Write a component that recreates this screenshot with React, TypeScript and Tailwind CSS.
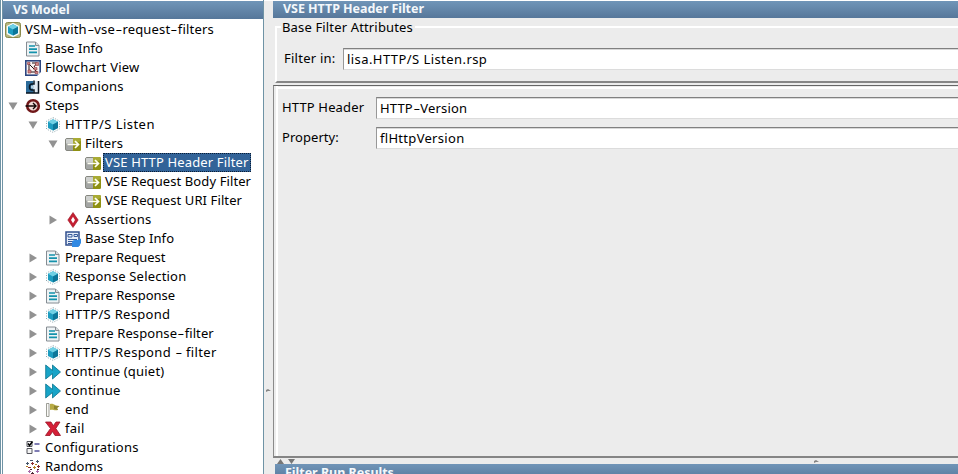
import { Fragment, type ReactNode } from "react";

type IconName =
  | "root" | "doc" | "flow" | "companion" | "steps" | "cube" | "filter"
  | "assertion" | "stepinfo" | "continue" | "end" | "fail" | "config" | "random";

const cube = (
  <>
    <path d="M8 2.200 13 4.800v6.200L8 13.600 3 11V4.800z" fill="#1c9cc0" />
    <path d="M8 2.200 13 4.800 8 7.400 3 4.800z" fill="#6fd0e4" />
    <path d="M8 7.400 13 4.800V11l-5 2.600z" fill="#0c7699" />
  </>
);

const drawings: Record<IconName, ReactNode> = {
  root: (
    <>
      <rect x="0.5" y="0.5" width="15" height="15" rx="2" fill="#b5b57c" stroke="#8b8a4c" />
      <path d="M8 .8 14.300 4v8L8 15.200 1.700 12V4z" fill="#f3fbfc" />
      {cube}
    </>
  ),
  doc: (
    <>
      <path d="M1.500 1h9l3.500 3.500V15H1.500z" fill="#eef3f5" stroke="#858c92" />
      <path d="M10.500 1v3.500H14" fill="#d7dcdf" stroke="#858c92" />
      <path d="M4 5h6M4 8.200h8M4 11.400h8" stroke="#1592ac" strokeWidth="1.700" />
    </>
  ),
  flow: (
    <>
      <rect x="0.8" y="0.8" width="14.4" height="14.4" fill="#faf4f3" stroke="#2d4680" strokeWidth="1.600" />
      <path d="M4 4v8M4 4l8 8M7 3h5M11 4l-2 3M5 12h6" stroke="#241315" />
      <path d="M2.500 2.500h2.500v2H2.500zM10.500 2.500h3v3h-3zM3 10h3v3H3zM9 7.500h3v2.500H9zM10 11.500h3v2h-3z" fill="#cf8585" stroke="#8d3a40" strokeWidth="0.600" />
      <path d="M12 16l4-4v4z" fill="#fff" />
    </>
  ),
  companion: (
    <>
      <path d="M1 2h7v12H1z" fill="#2c6b99" />
      <path d="M8 2h6v12H8z" fill="#dfe9f2" />
      <path d="M13.500 2v12H1" fill="none" stroke="#07131e" strokeWidth="1.500" />
      <path d="M9 1.500v3.500H7q-2.500 0-2.500 3T7 11h2v3" fill="none" stroke="#081723" strokeWidth="1.500" />
      <path d="M6 6.500h3v3H6z" fill="#b5cfdf" />
    </>
  ),
  steps: (
    <>
      <circle cx="8" cy="8" r="5.800" fill="#f0dcd8" stroke="#701719" strokeWidth="2.600" />
      <path d="M0.500 8H11M8 5l3 3-3 3" fill="none" stroke="#120707" strokeWidth="1.400" />
    </>
  ),
  cube: (
    <>
      <path d="M8 .6 14.500 4v8L8 15.400 1.500 12V4z" fill="#fbfdfd" stroke="#8fa6ae" strokeDasharray="1 1.500" />
      {cube}
    </>
  ),
  filter: (
    <>
      <rect x="0.5" y="2.5" width="15" height="12" rx="1.5" fill="#a3a5a3" stroke="#85877f" />
      <path d="M1 3.500q0-.5.5-.5H8v4.500H1z" fill="#cfd1cf" />
      <path d="M8 2h6.500Q16 2 16 3.500v10q0 1.500-1.500 1.500H8z" fill="#8f9112" />
      <path d="M8 2h6.500Q16 2 16 3.500V5L8 8z" fill="#a9ab35" />
      <path d="M2.500 8.500H13M10 5l3.500 3.500L10 12" fill="none" stroke="#fffff2" strokeWidth="1.700" />
    </>
  ),
  assertion: (
    <>
      <path d="M8 .5 13.200 8 8 15.500 2.800 8z" fill="#c41f32" stroke="#9a1424" strokeWidth="0.600" />
      <path d="M8 4.800 10 8 8 11.200 6 8z" fill="#fff" />
    </>
  ),
  stepinfo: (
    <>
      <rect x="1" y="1" width="13" height="13" fill="#e5edf8" stroke="#314f8d" strokeWidth="1.500" />
      <path d="M3 3.500h4v2.500H3zM9 3.500h3.500v2H9zM3 8.500h9M3 10.500h5M3 12.500h4" fill="none" stroke="#385b9b" />
      <path d="M7 16v-4q0-3 3-3h3l3-1.500V12l-2.500 4z" fill="#3189e3" />
    </>
  ),
  continue: (
    <path d="M.7 1 7.500 6.500V1l8 7-8 7V9.500L.7 15z" fill="#18a4c7" stroke="#08728d" strokeWidth="0.800" />
  ),
  end: (
    <>
      <path d="M1.500 1.500h2.500v13H1.500z" fill="#fafaf7" stroke="#85877f" strokeWidth="0.800" />
      <path d="M5 2c4-1 4 2 9.500 2L12 6l1 2C9 9 8 7 5 8z" fill="#b7aa43" />
      <path d="M9 3.500c2 1 3 .5 5.500.5L12 6l1 2-4-1z" fill="#8d832f" />
    </>
  ),
  fail: (
    <path d="M.5 1H6l2.300 3.700L11 1h4l-4.200 6.500L15.500 14.500H10L7.500 10.500 5 14.500H.5l5-7z" fill="#d51f37" stroke="#981426" strokeWidth="0.800" />
  ),
  config: (
    <>
      <path d="M2 1.500h5v5H2zM2 8.500h5v5H2z" fill="#f3f3f3" stroke="#55565e" />
      <path d="m3 3.500 1.500 2 3-4" fill="none" stroke="#000" strokeWidth="1.500" />
      <path d="M9.500 4h5M9.500 11h5" stroke="#54519a" strokeWidth="1.400" />
    </>
  ),
  random: (
    <>
      <path d="M5 1.500h3M1 4.500h3M2.500 3v3M11 2.500h3M12.500 1v3" stroke="#45566c" />
      <path d="M6 4.500h3M7.500 3v3M3 8.500h3M12 7.500h3M13.500 6v3M10 15.500h3" stroke="#8b2d2f" />
      <path d="M10 5.500h2M8 8.500h3M9.500 7v3M1 7.500h2" stroke="#b78120" />
      <path d="M3 12.500h3M4.500 11v3M11 12.500h3M12.500 11v3" stroke="#a869ab" />
      <path d="M6 14.500h3M7.500 13v3M5 10.500h2M12 10.500h2" stroke="#4b2632" />
    </>
  ),
};

function Icon({ name }: { name: IconName }) {
  return (
    <svg viewBox="0 0 16 16" className="size-4 shrink-0">
      {drawings[name]}
    </svg>
  );
}

function Toggle({ open }: { open: boolean }) {
  return (
    <svg viewBox="0 0 10 10" className="size-2.5 shrink-0">
      <path d={open ? "M.5 1.500h9L5 9z" : "M1.500.5v9L9 5z"} fill="#929292" />
    </svg>
  );
}

/** Text whose hyphens are drawn wide. */
function Label({ text }: { text: string }) {
  return (
    <>
      {text.split("-").map((part, i) => (
        <Fragment key={i}>
          {i > 0 && <span className="inline-block w-[7.5px] scale-x-[1.6] text-center tracking-normal">-</span>}
          {part}
        </Fragment>
      ))}
    </>
  );
}

type Row = { label: string; icon: IconName; pad: string; tracking: string; toggle?: "open" | "closed"; selected?: boolean };

const rows: Row[] = [
  { label: "VSM-with-vse-request-filters", icon: "root", pad: "pl-[2px]", tracking: "tracking-[0.17px]" },
  { label: "Base Info", icon: "doc", pad: "pl-[22px]", tracking: "tracking-[0.05px]" },
  { label: "Flowchart View", icon: "flow", pad: "pl-[22px]", tracking: "tracking-[0.22px]" },
  { label: "Companions", icon: "companion", pad: "pl-[22px]", tracking: "tracking-[0.15px]" },
  { label: "Steps", icon: "steps", pad: "pl-[5px]", tracking: "tracking-[0.15px]", toggle: "open" },
  { label: "HTTP/S Listen", icon: "cube", pad: "pl-[25px]", tracking: "tracking-[0.45px]", toggle: "open" },
  { label: "Filters", icon: "filter", pad: "pl-[45px]", tracking: "tracking-[0.15px]", toggle: "open" },
  { label: "VSE HTTP Header Filter", icon: "filter", pad: "pl-[82px]", tracking: "tracking-[0.15px]", selected: true },
  { label: "VSE Request Body Filter", icon: "filter", pad: "pl-[82px]", tracking: "tracking-[0.1px]" },
  { label: "VSE Request URI Filter", icon: "filter", pad: "pl-[82px]", tracking: "tracking-[0.1px]" },
  { label: "Assertions", icon: "assertion", pad: "pl-[45px]", tracking: "tracking-[0.3px]", toggle: "closed" },
  { label: "Base Step Info", icon: "stepinfo", pad: "pl-[62px]", tracking: "tracking-[0.08px]" },
  { label: "Prepare Request", icon: "doc", pad: "pl-[25px]", tracking: "tracking-[-0.05px]", toggle: "closed" },
  { label: "Response Selection", icon: "cube", pad: "pl-[25px]", tracking: "tracking-[0.2px]", toggle: "closed" },
  { label: "Prepare Response", icon: "doc", pad: "pl-[25px]", tracking: "tracking-[-0.03px]", toggle: "closed" },
  { label: "HTTP/S Respond", icon: "cube", pad: "pl-[25px]", tracking: "tracking-[0.3px]", toggle: "closed" },
  { label: "Prepare Response-filter", icon: "doc", pad: "pl-[25px]", tracking: "tracking-[0.1px]", toggle: "closed" },
  { label: "HTTP/S Respond - filter", icon: "cube", pad: "pl-[25px]", tracking: "tracking-[0.35px]", toggle: "closed" },
  { label: "continue (quiet)", icon: "continue", pad: "pl-[25px]", tracking: "tracking-[0.2px]", toggle: "closed" },
  { label: "continue", icon: "continue", pad: "pl-[25px]", tracking: "tracking-[0.25px]", toggle: "closed" },
  { label: "end", icon: "end", pad: "pl-[25px]", tracking: "tracking-[0.15px]", toggle: "closed" },
  { label: "fail", icon: "fail", pad: "pl-[25px]", tracking: "tracking-[0.3px]", toggle: "closed" },
  { label: "Configurations", icon: "config", pad: "pl-[22px]", tracking: "tracking-[0.22px]" },
  { label: "Randoms", icon: "random", pad: "pl-[22px]", tracking: "tracking-[0.05px]" },
];

function TreeRow({ row }: { row: Row }) {
  return (
    <div className={`flex h-[19px] shrink-0 items-center ${row.pad}`}>
      {row.toggle && (
        <span className="mr-[7px] flex"><Toggle open={row.toggle === "open"} /></span>
      )}
      <Icon name={row.icon} />
      <span
        className={`ml-[2px] h-[19px] whitespace-nowrap border border-dotted pl-px leading-[17px] ${row.tracking} ${
          row.selected ? "w-[148px] border-[#0b1d34] bg-[#326398] text-white" : "border-transparent"
        }`}
      >
        <Label text={row.label} />
      </span>
    </div>
  );
}

function TitleBar({ text, className }: { text: string; className: string }) {
  return (
    <div className={`shrink-0 overflow-hidden whitespace-nowrap bg-linear-to-b from-[#7095b8] to-[#56779a] text-[12.5px] font-bold text-[#f4f8fb] ${className}`}>
      {text}
    </div>
  );
}

function Field({ value, tracking }: { value: string; tracking: string }) {
  return (
    <div className={`h-[22px] flex-1 whitespace-nowrap border-y border-l border-t-[#808080] border-b-[#dcdcdc] border-l-[#989898] bg-white pl-[3px] leading-[21px] shadow-[inset_0_1px_0_#d8d8d8] ${tracking}`}>
      <Label text={value} />
    </div>
  );
}

export default function App() {
  return (
    <div className="flex h-[474px] w-[958px] overflow-hidden bg-[#ececec] font-['Noto_Sans','Open_Sans',sans-serif] text-[13px] tracking-[0.15px] text-black">
      <div className="flex w-[264px] shrink-0 flex-col overflow-hidden border-r border-l-3 border-double border-[#6f93a5] bg-white pt-px">
        <TitleBar text="VS Model" className="h-[18px] pl-[10px] leading-[17px] tracking-[-0.05px]" />
        <div className="flex flex-col pt-px">
          {rows.map((row) => <TreeRow key={row.label} row={row} />)}
        </div>
      </div>

      <div className="flex w-[9px] shrink-0 flex-col border-t border-white pt-[387px] pl-[2px]">
        <svg viewBox="0 0 5 5" className="size-[5px]">
          <path d="M0 4V2l2-1 3 2H2z" fill="#858585" />
        </svg>
      </div>

      <div className="flex min-w-0 flex-1 flex-col border-t border-white">
        <TitleBar text="VSE HTTP Header Filter" className="h-[17px] pl-[10px] leading-[16px] tracking-[-0.05px]" />

        <section className="mt-[8px] ml-[2px] flex h-[57px] shrink-0 flex-col border-t-2 border-b-2 border-l-2 border-t-white border-b-[#868686] border-l-white">
          <h2 className="-mt-[8px] ml-[4px] h-[16px] w-[134px] whitespace-nowrap bg-[#ececec] pl-px leading-[14px]">
            Base Filter Attributes
          </h2>
          <div className="mt-[12px] flex h-[22px] items-center">
            <span className="w-[66px] pl-[7px] tracking-[0.25px]">Filter in:</span>
            <Field value="lisa.HTTP/S Listen.rsp" tracking="tracking-[0.43px]" />
          </div>
        </section>

        <section className="mt-[2px] flex h-[373px] shrink-0 flex-col border-t border-b-2 border-l border-t-[#666] border-b-[#858585] border-l-[#8a8a8a]">
          <div className="ml-[2px] flex flex-1 flex-col border-l-2 border-white">
            <div className="mt-px border-t-2 border-white" />
            <div className="mt-[8px] flex h-[22px] items-center">
              <span className="w-[98px] pl-[4px]">HTTP Header</span>
              <Field value="HTTP-Version" tracking="tracking-[0.15px]" />
            </div>
            <div className="mt-[8px] flex h-[22px] items-center">
              <span className="w-[98px] pl-[4px] tracking-[0.05px]">Property:</span>
              <Field value="flHttpVersion" tracking="tracking-[0.3px]" />
            </div>
          </div>
        </section>

        <div className="ml-[2px] flex h-[6px] shrink-0 items-center">
          <svg viewBox="0 0 20 6" className="ml-[2px] h-[6px] w-5 shrink-0">
            <path d="M0 6 3.500 1 7 6zM11 1h7l-3.500 5z" fill="#777" />
          </svg>
          <svg viewBox="0 0 5 5" className="ml-[517px] size-[5px]">
            <path d="M0 4V2l2-1 3 2H2z" fill="#858585" />
          </svg>
        </div>
        <TitleBar text="Filter Run Results" className="ml-[2px] h-[17px] pl-[10px] leading-[17px] tracking-[-0.02px]" />
      </div>
    </div>
  );
}
